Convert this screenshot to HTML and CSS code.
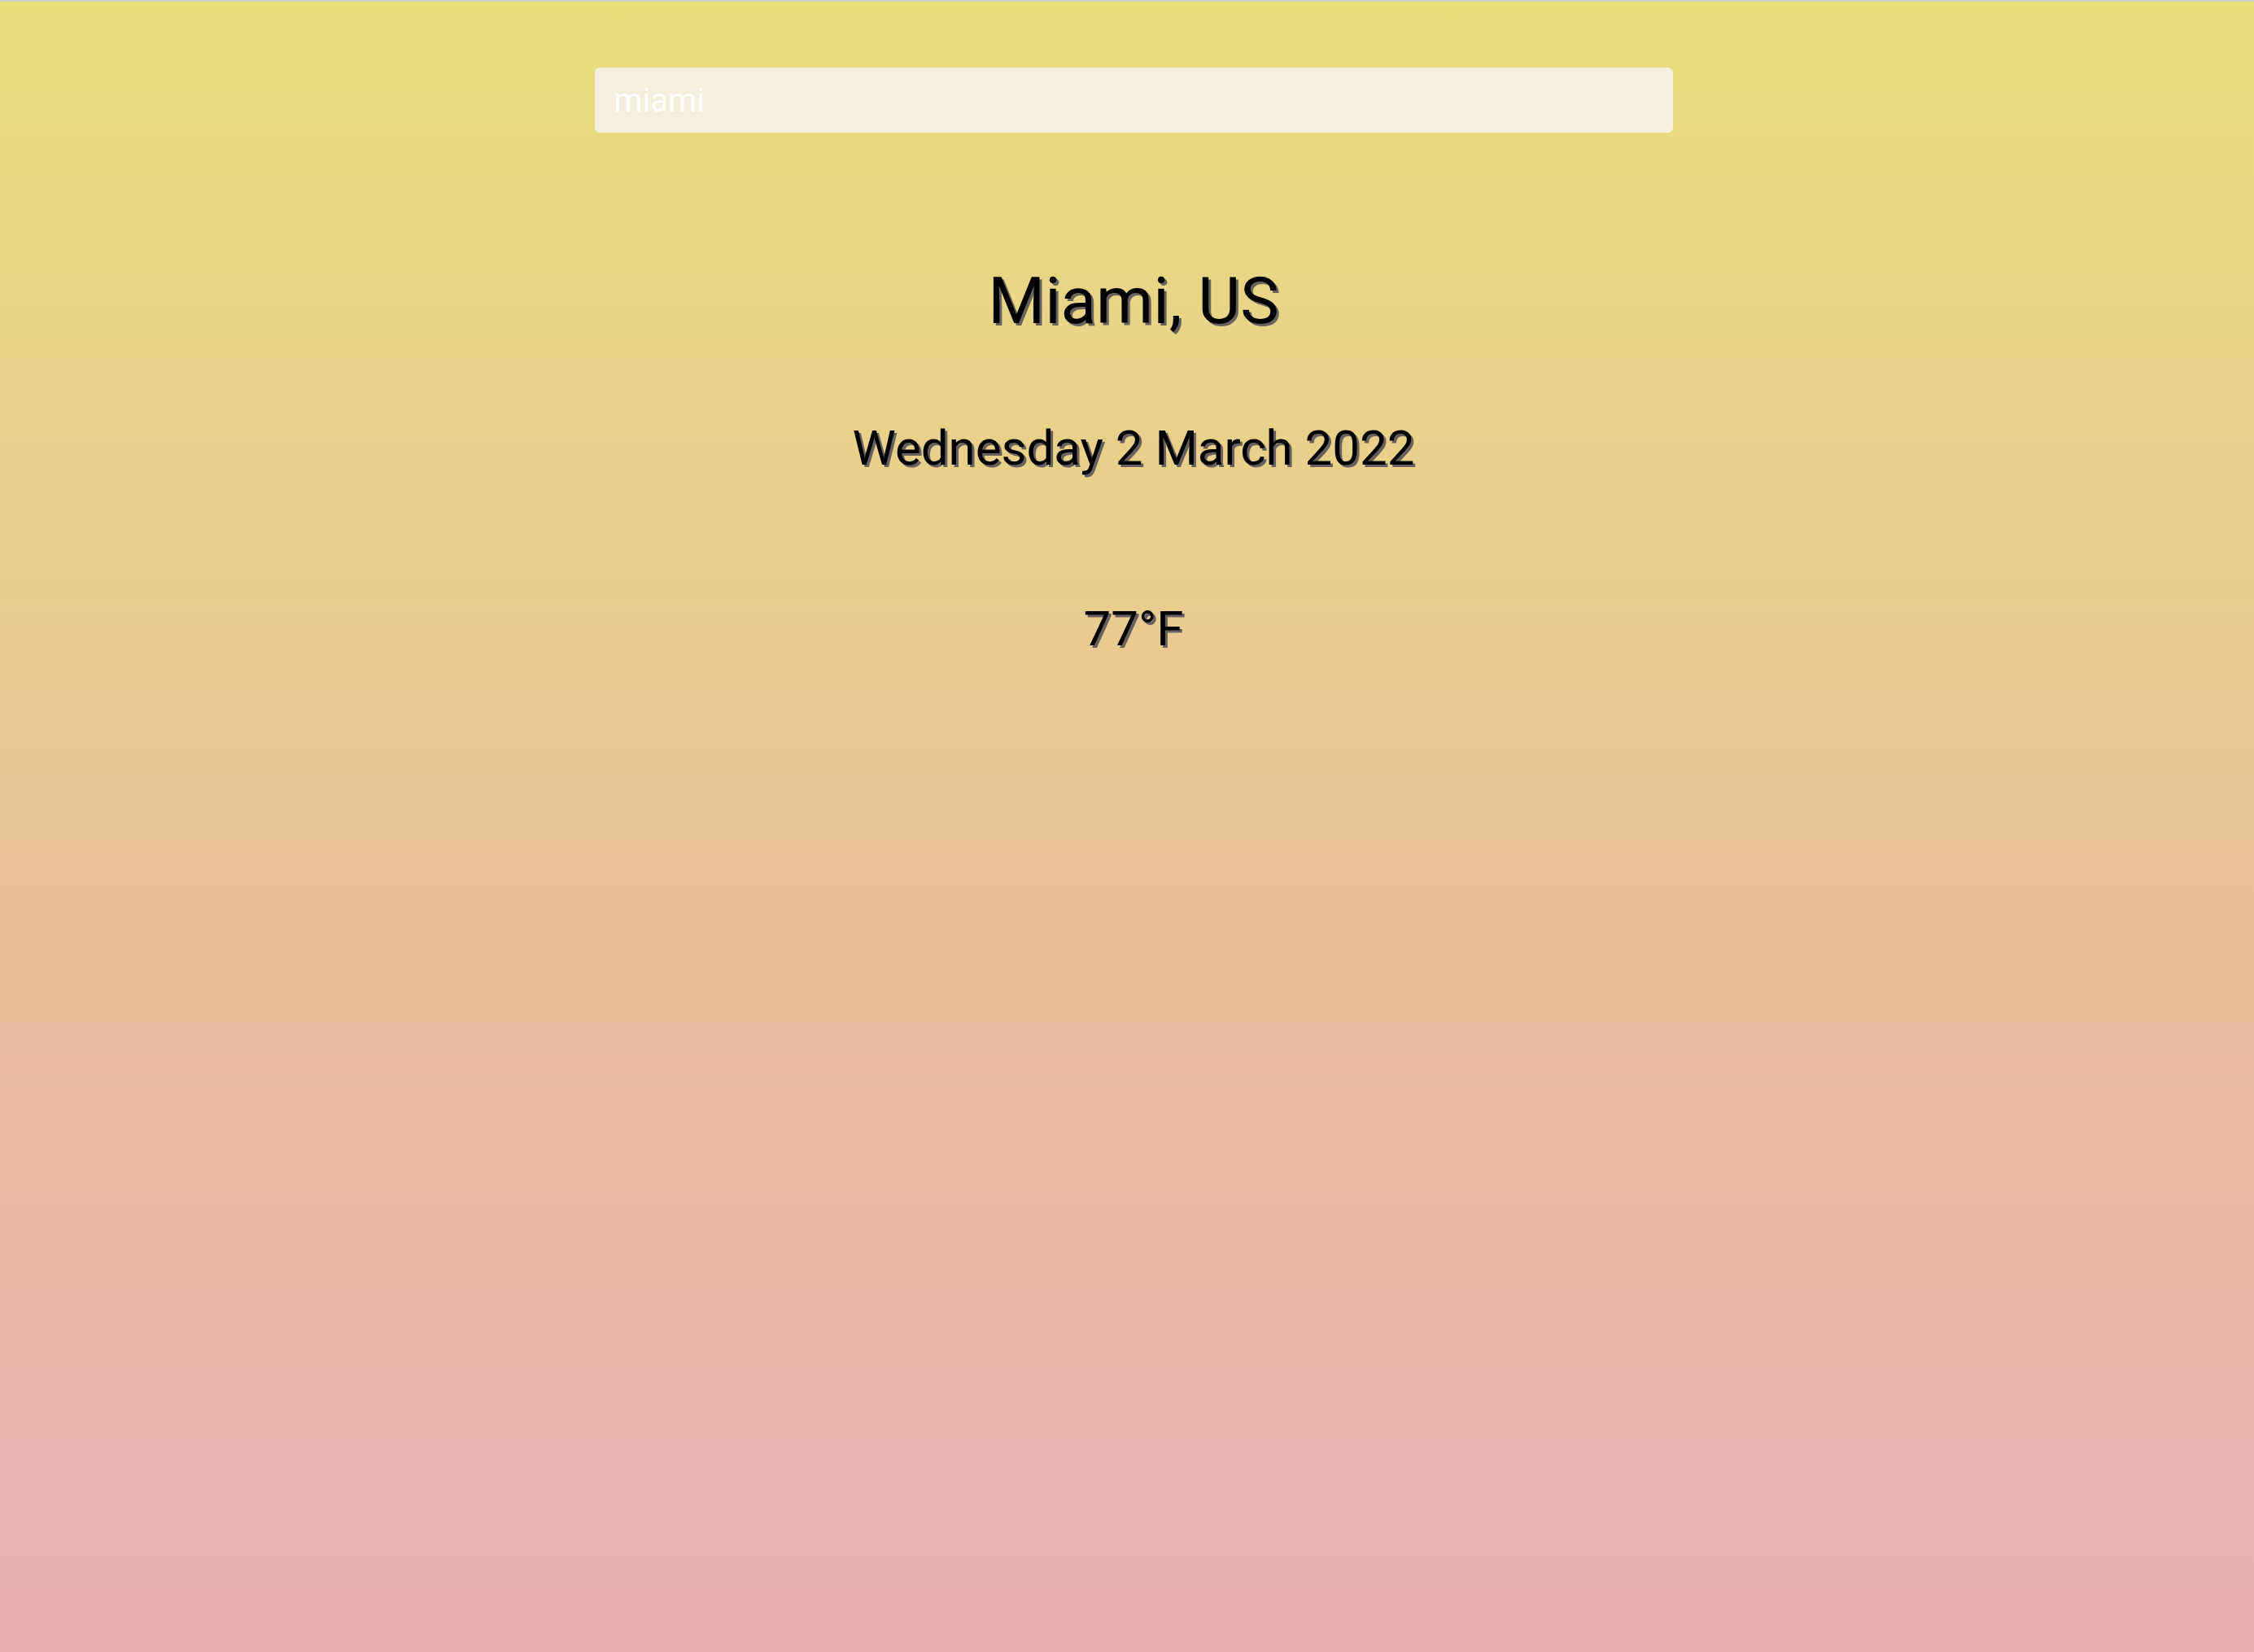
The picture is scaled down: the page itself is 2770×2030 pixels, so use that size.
FILE: index.html
```html
<!DOCTYPE html>
<html lang="en">
<head>
<meta charset="utf-8">
<title>Weather</title>
<link rel="stylesheet" href="styles.css">
</head>
<body>
<div class="app">
  <main class="content">
    <div class="search-box">
      <input class="search-bar" type="text" value="miami" placeholder="Search...">
    </div>
    <div class="location-box">
      <div class="location">Miami, US</div>
      <div class="date">Wednesday 2 March 2022</div>
    </div>
    <div class="weather-box">
      <div class="temp">77°F</div>
    </div>
  </main>
</div>
</body>
</html>
```
FILE: styles.css
```css
html, body {
  margin: 0;
  padding: 0;
}
body {
  font-family: Roboto, "Liberation Sans", sans-serif;
  background: #ffffff;
}
.app {
  border-top: 2px solid #cfcfcf;
  min-height: 2028px;
  background: linear-gradient(to bottom, #e9de7c 0%, #e8c597 50%, #e8adb3 100%);
}
.content {
  display: flex;
  flex-direction: column;
  align-items: center;
  padding-left: 16px;
  padding-top: 81px;
}
.search-box {
  width: 1325px;
}
.search-bar {
  display: block;
  box-sizing: border-box;
  width: 100%;
  height: 80px;
  border: none;
  outline: none;
  border-radius: 6px;
  background: #f4eedc;
  padding: 0 24px;
  font-family: Roboto, "Liberation Sans", sans-serif;
  font-size: 40px;
  color: #ffffff;
}
.location-box {
  display: flex;
  flex-direction: column;
  align-items: center;
}
.location {
  margin-top: 160px;
  font-size: 80px;
  font-weight: 400;
  color: #000;
  text-shadow: 3px 3px rgba(60, 60, 80, 0.75);
}
.date {
  margin-top: 98px;
  font-size: 60px;
  font-weight: 400;
  color: #000;
  text-shadow: 3px 3px rgba(60, 60, 80, 0.75);
}
.weather-box {
  display: flex;
  justify-content: center;
}
.temp {
  margin-top: 151px;
  font-size: 60px;
  font-weight: 400;
  color: #000;
  text-shadow: 3px 3px rgba(60, 60, 80, 0.75);
}
```
